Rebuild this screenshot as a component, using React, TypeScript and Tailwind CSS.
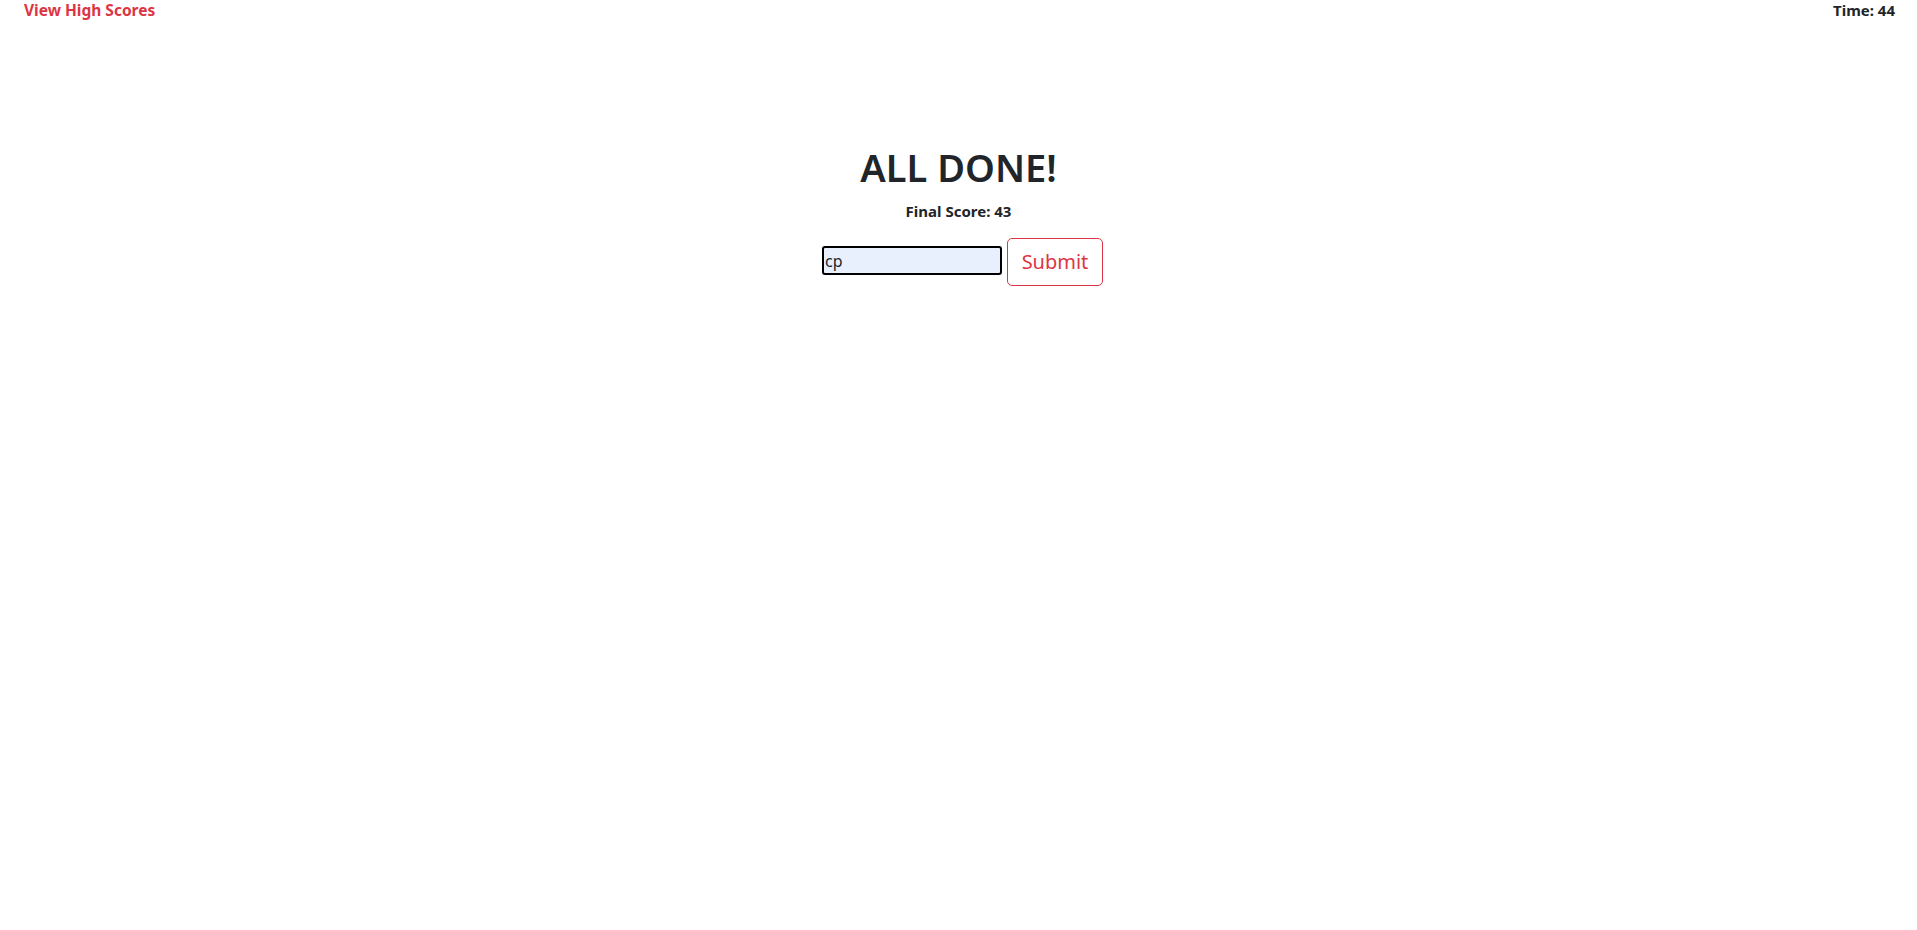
export default function App() {
  return (
    <div
      className="min-h-[930px] bg-white text-[#212529]"
      style={{ fontFamily: '"Noto Sans", "Open Sans", sans-serif' }}
    >
      <header className="flex justify-between px-[24px] pr-[22px] leading-[20px]">
        <a href="#" className="text-[15.5px] font-bold text-[#dc3545]">
          View High Scores
        </a>
        <span className="text-[15px] font-bold">Time: 44</span>
      </header>

      <main className="flex flex-col items-center pt-[123px]">
        <h1 className="text-[38px] font-semibold leading-[48px]">ALL DONE!</h1>
        <p className="mt-[10px] text-[15px] font-bold leading-[20px]">Final Score: 43</p>
        <form className="mt-[17px] flex items-start gap-[5px] pl-[8px]">
          <input
            defaultValue="cp"
            className="mt-[8px] h-[29px] w-[180px] rounded-[3px] border-2 border-black bg-[#e8f0fe] px-[1px] text-[16px] outline-none"
          />
          <button
            type="button"
            className="h-[48px] w-[96px] rounded-[5px] border border-[#dc3545] text-[20px] text-[#dc3545]"
          >
            Submit
          </button>
        </form>
      </main>
    </div>
  );
}
